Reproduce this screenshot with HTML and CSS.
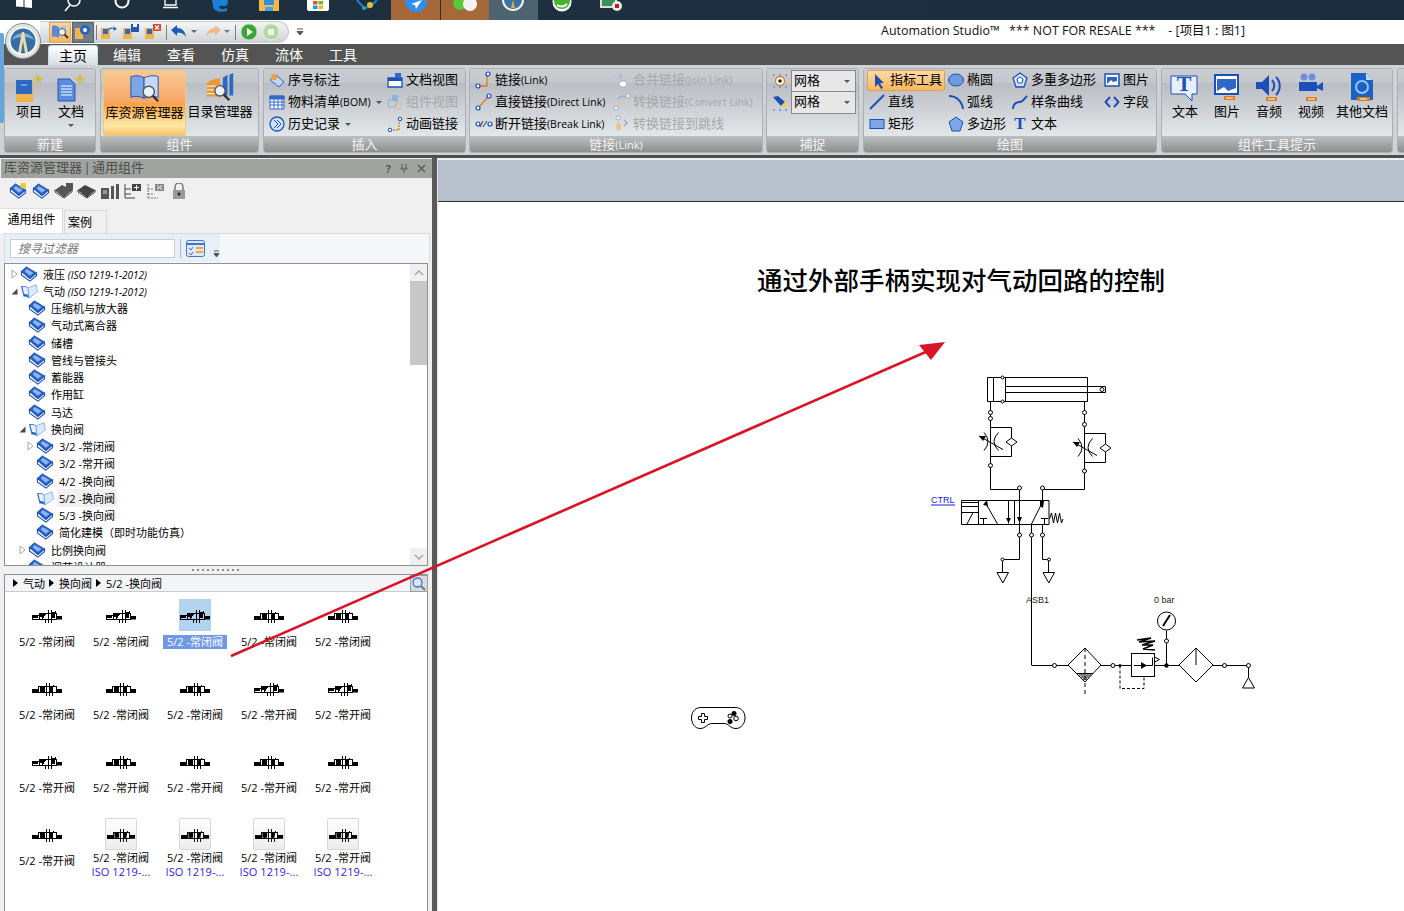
FILE: index.html
```html
<!DOCTYPE html>
<html lang="zh">
<head>
<meta charset="utf-8">
<title>Automation Studio</title>
<link rel="stylesheet" href="styles.css">
</head>
<body>
<svg class="defs" xmlns="http://www.w3.org/2000/svg">
  <symbol id="book" viewBox="0 0 20 18"><path d="M1.500 6 7 1l11.500 7-7.500 6z" fill="#2566d6" stroke="#1b4fb6"/><path d="M5 6 7.500 3.500l7.500 4.500-4 3z" fill="#8fb6ee"/><path d="M1.500 6v4L11 17l7.500-6V8L11 14z" fill="#fff" stroke="#1b4fb6" stroke-width="1.200"/></symbol>
  <symbol id="bookopen" viewBox="0 0 20 18"><path d="M1 4c3-1 6-.5 8 1.500l1 11.500c-2-1.500-4-2-6-1.500z" fill="#2566d6"/><path d="M9 5.500 18 2l1.500 8L10 17z" fill="#dce9fb" stroke="#6f9fe6" stroke-width=".8"/><path d="M2.500 4.500c2-.8 4.500-.3 6 1.300l.5 8c-1.500-1-3-1.300-4.500-1.300z" fill="#e7f0fc"/></symbol>
  <symbol id="expc" viewBox="0 0 7 10"><path d="M1 1 6 5 1 9z" fill="#fff" stroke="#a8a8a8"/></symbol>
  <symbol id="expo" viewBox="0 0 7 10"><path d="M6.500 2.500v6h-6z" fill="#4a4a4a"/></symbol>
  <symbol id="v1" viewBox="0 0 32 32"><g shape-rendering="crispEdges" fill="none" stroke="#000"><path d="M1.500 16.500h7v4h-7zM8.500 14.500h17v6h-17z"/><path d="M17.500 11v13M20.500 11v13M14.500 20v4M11 20l4-6M24 12l3 8"/></g><path d="M2 17h5v2H2zM26 17h5v3.500h-5zM9 15h4v3H9zM21 13h3v6h-3z"/></symbol>
  <symbol id="v2" viewBox="0 0 32 32"><g shape-rendering="crispEdges" fill="none" stroke="#000"><path d="M1.500 17.500h6v3h-6zM7.500 14.500h18v6h-18z"/><path d="M15.500 11v13M18.500 11v13M21.500 20v4M11 20l3-6M20 20l3-7"/></g><path d="M2 18h6v3H2zM25 17h6v4h-6zM9 15h5v5H9zM19 15h3v5h-3z"/></symbol>
  <symbol id="link" viewBox="0 0 18 18"><path d="M3 15h9V4" fill="none" stroke="#e07c1a" stroke-width="1.300"/><circle cx="3" cy="15" r="2" fill="#fff" stroke="#1846c4" stroke-width="1.200"/><circle cx="13" cy="3" r="2" fill="#fff" stroke="#1846c4" stroke-width="1.200"/></symbol>
  <symbol id="direct" viewBox="0 0 18 18"><path d="M3 15 13 4" stroke="#e07c1a" stroke-width="1.300"/><circle cx="3" cy="15" r="2" fill="#fff" stroke="#1846c4" stroke-width="1.200"/><circle cx="14" cy="3" r="2" fill="#fff" stroke="#1846c4" stroke-width="1.200"/></symbol>
  <symbol id="break" viewBox="0 0 18 18"><circle cx="3" cy="9" r="2" fill="#fff" stroke="#1846c4" stroke-width="1.200"/><circle cx="15" cy="9" r="2" fill="#fff" stroke="#1846c4" stroke-width="1.200"/><path d="M5 12 8 6M8 12l4-6" stroke="#555" stroke-width="1.200"/></symbol>
  <symbol id="join" viewBox="0 0 18 18"><path d="M1 5h16M1 13h16" stroke="#e9b98c"/><rect x="6" y="2" width="3" height="6" fill="#a9bde6"/><rect x="6" y="10" width="8" height="6" rx="3" fill="#fff" stroke="#94aee0"/></symbol>
  <symbol id="conv" viewBox="0 0 18 18"><path d="M3 15 14 4" stroke="#e9b98c" stroke-dasharray="2 1" stroke-width="1.300"/><path d="M5 6c2-3 5-3 7-2" fill="none" stroke="#94aee0" stroke-width="1.500"/><circle cx="3" cy="15" r="2" fill="#fff" stroke="#94aee0"/><circle cx="15" cy="3" r="2" fill="#fff" stroke="#94aee0"/></symbol>
  <symbol id="jump" viewBox="0 0 18 18"><circle cx="5" cy="3" r="2" fill="#fff" stroke="#94aee0"/><rect x="3" y="9" width="5" height="6" rx="1" fill="#f0c78f"/><path d="M5.500 5v11" stroke="#e9b98c"/><path d="M11 5l3 3-3 3" fill="none" stroke="#94aee0" stroke-width="1.500"/></symbol>
</svg>

<header class="taskbar">
  <div class="tb"><svg width="18" height="20" viewBox="0 0 18 20"><path d="M1 0h7.500v7L1 6.500zM9.500 0H17v8L9.500 7.200z" fill="#fff"/></svg></div>
  <div class="tb"><svg width="20" height="20" viewBox="0 0 20 20"><circle cx="11" cy="0" r="6" fill="none" stroke="#fff" stroke-width="1.500"/><path d="M7 5 2 11" stroke="#fff" stroke-width="1.500"/></svg></div>
  <div class="tb"><svg width="20" height="20" viewBox="0 0 20 20"><circle cx="10" cy="1" r="6.500" fill="none" stroke="#fff" stroke-width="2"/></svg></div>
  <div class="tb"><svg width="18" height="20" viewBox="0 0 18 20"><path d="M3 0v5h11V0M1 7.500h15" fill="none" stroke="#fff" stroke-width="1.300"/></svg></div>
  <div class="tb"><svg width="18" height="20" viewBox="0 0 18 20"><path d="M1 0h16c0 4-1 6-3 6H8c0 3 3 4 8 2v3c-7 2-14 0-14-5 0-2-1-4-1-6z" fill="#1a7fd6"/></svg></div>
  <div class="tb"><svg width="22" height="20" viewBox="0 0 22 20"><path d="M1 0h20v11H1z" fill="#f3b94a"/><path d="M6 0h10v5H6z" fill="#2f8fe0"/><path d="M7 7h8v4H7z" fill="#3da4ef"/></svg></div>
  <div class="tb"><svg width="24" height="20" viewBox="0 0 24 20"><path d="M1 0h22v9a2 2 0 0 1-2 2H3a2 2 0 0 1-2-2z" fill="#fff"/><path d="M7 1h4.500v3.500H7z" fill="#e8512a"/><path d="M12.500 1H17v3.500h-4.500z" fill="#75b92a"/><path d="M7 5.500h4.500V9H7z" fill="#1c9be8"/><path d="M12.500 5.500H17V9h-4.500z" fill="#f7b91d"/></svg></div>
  <div class="tb"><svg width="24" height="20" viewBox="0 0 24 20"><path d="M2 0 9 8l6-1 7-7" fill="none" stroke="#1682d8" stroke-width="2"/><circle cx="15" cy="5" r="3" fill="#e3c12c"/><circle cx="9" cy="8" r="2" fill="#28a8a0"/></svg></div>
  <div class="tb tb-warm"><svg width="28" height="20" viewBox="0 0 28 20"><circle cx="14" cy="1" r="11" fill="#2f8ff0"/><path d="M20 0 9 4l4 1 1 4z" fill="#fff"/></svg></div>
  <div class="tb tb-warm tb-line"><svg width="28" height="20" viewBox="0 0 28 20"><circle cx="9" cy="3" r="7" fill="#5cc636"/><circle cx="19" cy="4" r="7" fill="#f3f3f3"/></svg></div>
  <div class="tb tb-on"><svg width="24" height="20" viewBox="0 0 24 20"><circle cx="12" cy="0" r="11" fill="#eef2f6"/><circle cx="12" cy="0" r="9" fill="#3b72a6"/><path d="M10 8 12 0l2 8z" fill="#f2a33a"/></svg></div>
  <div class="tb"><svg width="24" height="20" viewBox="0 0 24 20"><circle cx="12" cy="2" r="9.500" fill="#fff"/><circle cx="12" cy="1" r="8" fill="#45b52f"/><path d="M7 5c3 2 7 2 10-1" fill="none" stroke="#fff" stroke-width="2"/></svg></div>
  <div class="tb"><svg width="26" height="20" viewBox="0 0 26 20"><path d="M2 0h17v8H2z" fill="#d8dee2"/><path d="M4 0h13v6H4z" fill="#3b8f55"/><circle cx="19" cy="6" r="5" fill="#eee"/><rect x="17" y="4" width="4" height="4" fill="#d4141d"/></svg></div>
</header>

<div class="titlerow">
  <div class="qat">
    <span class="qbtn qbtn-hot"><svg width="18" height="16" viewBox="0 0 18 16"><path d="M1 2c3-1 5 0 7 1v11c-2-1-4-2-7-1z" fill="#5c89d6"/><path d="M8 3c2-1 5-2 7-1v8" fill="#a9c8f2"/><circle cx="11" cy="8" r="3.500" fill="#e6f0fb" stroke="#555"/><path d="M13.500 10.500 17 14" stroke="#333" stroke-width="1.800"/></svg></span>
    <span class="qbtn qbtn-dark"><svg width="18" height="16" viewBox="0 0 18 16"><path d="M1 4h8v11H1z" fill="#f0b44e"/><circle cx="11" cy="6" r="5" fill="#2a62c8"/><circle cx="11" cy="6" r="2" fill="#fff"/></svg></span>
    <i class="qsep"></i>
    <span class="qicon"><svg width="18" height="16" viewBox="0 0 18 16"><path d="M1 4h9v11H1z" fill="#f0b44e"/><path d="M3 5h5v5H3z" fill="#2f66c8"/><path d="M8 6c1-3 4-3 6-2l-1-2 4 3-4 2 1-2c-2-.5-4 0-5 1z" fill="#2257b8"/></svg></span>
    <span class="qicon"><svg width="18" height="16" viewBox="0 0 18 16"><path d="M1 4h9v11H1z" fill="#f0b44e"/><path d="M3 5h5v5H3z" fill="#2f66c8"/><path d="M9 0h8v8H9z" fill="#2257b8"/><path d="M11 0h4v3h-4z" fill="#fff"/></svg></span>
    <span class="qicon"><svg width="18" height="16" viewBox="0 0 18 16"><path d="M1 4h9v11H1z" fill="#f0b44e"/><path d="M3 5h5v5H3z" fill="#2f66c8"/><path d="M9 0h8v7H9z" fill="#d94a2a"/><path d="M11 1.500l4 4M15 1.500l-4 4" stroke="#fff" stroke-width="1.300"/></svg></span>
    <i class="qsep"></i>
    <span class="qicon q-wide"><svg width="28" height="16" viewBox="0 0 28 16"><path d="M1 6 7 1v3c5 0 8 3 9 9-2-3-5-5-9-4v3z" fill="#1e5cb8"/><path d="M21 6h6l-3 3z" fill="#666"/></svg></span>
    <span class="qicon q-wide q-wide2"><svg width="28" height="16" viewBox="0 0 28 16"><path d="M17 6l-6-5v3C6 4 3 7 2 13c2-3 5-5 9-4v3z" fill="#f2b98a"/><path d="M20 6h6l-3 3z" fill="#777"/></svg></span>
    <i class="qsep qsep-last"></i>
    <span class="qicon"><svg width="18" height="18" viewBox="0 0 18 18"><circle cx="9" cy="9" r="8" fill="#3aa63a" stroke="#b8e0a8"/><path d="M7 5l6 4-6 4z" fill="#fff"/></svg></span>
    <span class="qicon"><svg width="18" height="18" viewBox="0 0 18 18"><circle cx="9" cy="9" r="8" fill="#b3d8a4" stroke="#dcefd2"/><rect x="6" y="6" width="6" height="6" fill="#eef5e8"/></svg></span>
  </div>
  <span class="qmenu"><svg width="8" height="8" viewBox="0 0 8 8"><path d="M1 1h6M1 3.500h6L4 7z" stroke="#555" fill="#555"/></svg></span>
  <div class="apptitle">Automation Studio™   *** NOT FOR RESALE ***    - [项目1 : 图1]</div>
</div>

<nav class="tabs">
  <span class="tab tab-on">主页</span><span class="tab">编辑</span><span class="tab">查看</span><span class="tab">仿真</span><span class="tab">流体</span><span class="tab">工具</span>
</nav>

<section class="ribbon">
  <div class="group g-new">
    <div class="gbody gbody-big">
      <div class="big"><svg class="ico32" viewBox="0 0 32 32"><path d="M3 8h17v22H3z" fill="#f0b44e"/><path d="M3 8h16v14H3z" fill="#2b68c4"/><path d="M8 13h6" stroke="#bcd2f4"/><path d="M22 4l6 6M28 4l-6 6M25 2v10M20 7h10" stroke="#d8b80e"/></svg><span>项目</span></div>
      <div class="big"><svg class="ico32" viewBox="0 0 32 32"><path d="M3 7h12l5 5v17H3z" fill="#5a8bdc" stroke="#2757b4"/><path d="M6 14h11M6 17h11M6 20h11M6 23h11" stroke="#fff"/><path d="M22 4l6 6M28 4l-6 6M25 2v10M20 7h10" stroke="#d8b80e"/></svg><span>文档</span><i class="caret"></i></div>
    </div>
    <div class="glabel">新建</div>
  </div>
  <div class="group g-comp">
    <div class="gbody gbody-big">
      <div class="big big-lib"><svg class="ico32" viewBox="0 0 34 34"><path d="M2 4c5-2 10-1 14 1v22c-4-2-9-3-14-1z" fill="#7ea6e4" stroke="#1e4fb4"/><path d="M16 5c5-2 11-3 15-1v22c-5-2-10-1-15 1z" fill="#c5d9f6" stroke="#1e4fb4"/><circle cx="21" cy="20" r="6" fill="#e9f2fc" stroke="#555" stroke-width="1.500"/><path d="M25 24l6 6" stroke="#333" stroke-width="2.500"/></svg><span>库资源管理器</span></div>
      <div class="big big-cat"><svg class="ico32" viewBox="0 0 34 34"><path d="M3 12c4-4 10-5 14-5v19H3z" fill="#e79a3a"/><path d="M3 15h14M3 19h14M3 23h14" stroke="#fff"/><path d="M20 6l5-3v22h-5zM27 3l4-2v24h-4z" fill="#2b68c4"/><circle cx="17" cy="20" r="5.500" fill="#e9f2fc" stroke="#555" stroke-width="1.500"/><path d="M21 24l6 6" stroke="#333" stroke-width="2.500"/></svg><span>目录管理器</span></div>
    </div>
    <div class="glabel">组件</div>
  </div>
  <div class="group g-ins">
    <div class="gbody gcols">
      <div class="col c-ins1">
        <div class="ri"><svg class="i16" viewBox="0 0 16 16"><path d="M1 8 7 3l8 7-5 5z" fill="#bcd4f4" stroke="#2f66c8"/><circle cx="5" cy="5" r="3" fill="#f0a030"/></svg><span>序号标注</span></div>
        <div class="ri"><svg class="i16" viewBox="0 0 16 16"><path d="M1 2h14v13H1z" fill="#fff" stroke="#3569c8"/><path d="M1 2h14v3H1zM5 5v10M9 5v10M13 5v10M1 8h14M1 11h14" stroke="#3569c8" fill="#3569c8"/></svg><span>物料清单<small>(BOM)</small></span><i class="caret caret-r"></i></div>
        <div class="ri"><svg class="i16" viewBox="0 0 16 16"><circle cx="8" cy="8" r="7" fill="#cfe0f8" stroke="#1f55bc" stroke-width="1.300"/><path d="M5 4l4 4-4 4M8 4l4 4-4 4" fill="none" stroke="#1f55bc"/></svg><span>历史记录</span><i class="caret caret-r"></i></div>
      </div>
      <div class="col c-ins2">
        <div class="ri"><svg class="i16" viewBox="0 0 16 16"><path d="M1 6h14v9H1z" fill="#fff" stroke="#1b50b8" stroke-width="1.300"/><path d="M1 6h14v3H1z" fill="#1b50b8"/><path d="M8 1h6v5H8z" fill="#2f66c8"/></svg><span>文档视图</span></div>
        <div class="ri ri-off"><svg class="i16" viewBox="0 0 16 16"><path d="M1 6h8v7H1z" fill="none" stroke="#94aee0"/><path d="M5 1h6v6H5z" fill="#94aee0"/><circle cx="11" cy="12" r="3.500" fill="none" stroke="#e9b98c"/></svg><span>组件视图</span></div>
        <div class="ri"><svg class="i16" viewBox="0 0 16 16"><path d="M3 14h9V5" fill="none" stroke="#e07c1a" stroke-dasharray="2 1" stroke-width="1.300"/><circle cx="3" cy="14" r="1.800" fill="#fff" stroke="#1846c4"/><circle cx="13" cy="3" r="1.800" fill="#fff" stroke="#1846c4"/></svg><span>动画链接</span></div>
      </div>
    </div>
    <div class="glabel">插入</div>
  </div>
  <div class="group g-link">
    <div class="gbody gcols">
      <div class="col c-link1">
        <div class="ri"><svg class="i18" viewBox="0 0 18 18"><use href="#link"/></svg><span>链接<small>(Link)</small></span></div>
        <div class="ri"><svg class="i18" viewBox="0 0 18 18"><use href="#direct"/></svg><span>直接链接<small>(Direct Link)</small></span></div>
        <div class="ri"><svg class="i18" viewBox="0 0 18 18"><use href="#break"/></svg><span>断开链接<small>(Break Link)</small></span></div>
      </div>
      <div class="col c-link2">
        <div class="ri ri-off"><svg class="i18" viewBox="0 0 18 18"><use href="#join"/></svg><span>合并链接<small>(Join Link)</small></span></div>
        <div class="ri ri-off"><svg class="i18" viewBox="0 0 18 18"><use href="#conv"/></svg><span>转换链接<small>(Convert Link)</small></span></div>
        <div class="ri ri-off"><svg class="i18" viewBox="0 0 18 18"><use href="#jump"/></svg><span>转换链接到跳线</span></div>
      </div>
    </div>
    <div class="glabel">链接<small>(Link)</small></div>
  </div>
  <div class="group g-snap">
    <div class="gbody snap">
      <div class="snaprow"><svg class="i16" viewBox="0 0 16 16"><g fill="#7c9ee0"><rect x="1" y="1" width="2" height="2"/><rect x="7" y="1" width="2" height="2"/><rect x="13" y="1" width="2" height="2"/><rect x="1" y="13" width="2" height="2"/><rect x="7" y="13" width="2" height="2"/><rect x="13" y="13" width="2" height="2"/></g><circle cx="8" cy="8" r="4.500" fill="#fff" stroke="#e07c1a" stroke-width="1.300"/><circle cx="8" cy="8" r="1.800" fill="#222"/></svg><span class="combo"><span>网格</span><i class="caret"></i></span></div>
      <div class="snaprow"><svg class="i16" viewBox="0 0 16 16"><path d="M1 2l5-1 7 6-4 4z" fill="#1b50b8"/><path d="M9 11l4-4 2 3-2 3z" fill="#f3d23a"/><g fill="#7c9ee0"><rect x="1" y="14" width="2" height="2"/><rect x="7" y="14" width="2" height="2"/><rect x="13" y="14" width="2" height="2"/></g></svg><span class="combo"><span>网格</span><i class="caret"></i></span></div>
    </div>
    <div class="glabel">捕捉</div>
  </div>
  <div class="group g-draw">
    <div class="gbody gcols">
      <div class="col c-d1">
        <div class="ri ri-hot"><svg class="i16" viewBox="0 0 16 16"><path d="M4 1v13l3-3 3 5 2-1-3-5h4z" fill="#1b50b8"/></svg><span>指标工具</span></div>
        <div class="ri"><svg class="i16" viewBox="0 0 16 16"><path d="M1 15 15 1" stroke="#1b50b8" stroke-width="2"/></svg><span>直线</span></div>
        <div class="ri"><svg class="i16" viewBox="0 0 16 16"><rect x="1" y="3.500" width="14" height="9" fill="#7fa6e6" stroke="#1b50b8"/></svg><span>矩形</span></div>
      </div>
      <div class="col c-d2">
        <div class="ri"><svg class="i16" viewBox="0 0 16 16"><ellipse cx="8" cy="8" rx="7.500" ry="6" fill="#6f9ae0" stroke="#1b50b8"/></svg><span>椭圆</span></div>
        <div class="ri"><svg class="i16" viewBox="0 0 16 16"><path d="M1 2c7 0 13 5 14 13" fill="none" stroke="#1b50b8" stroke-width="2"/></svg><span>弧线</span></div>
        <div class="ri"><svg class="i16" viewBox="0 0 16 16"><path d="M8 1l7 5-3 9H4L1 6z" fill="#7fa6e6" stroke="#1b50b8"/></svg><span>多边形</span></div>
      </div>
      <div class="col c-d3">
        <div class="ri"><svg class="i16" viewBox="0 0 16 16"><path d="M8 1l7 5-3 9H4L1 6z" fill="#d7e4f8" stroke="#1b50b8" stroke-width="1.300"/><path d="M8 5l3 2-1 4H6L5 7z" fill="#fff" stroke="#1b50b8"/></svg><span>多重多边形</span></div>
        <div class="ri"><svg class="i16" viewBox="0 0 16 16"><path d="M1 15c0-6 4-7 7-7 3 0 4-3 7-6" fill="none" stroke="#1b50b8" stroke-width="2"/></svg><span>样条曲线</span></div>
        <div class="ri"><b class="t-ico">T</b><span>文本</span></div>
      </div>
      <div class="col c-d4">
        <div class="ri"><svg class="i16" viewBox="0 0 16 16"><rect x="1" y="2" width="14" height="12" fill="#fff" stroke="#1b50b8" stroke-width="1.500"/><path d="M3 12V5h10v4l-4 1-2-2z" fill="#2f66c8"/></svg><span>图片</span></div>
        <div class="ri"><svg class="i16" viewBox="0 0 16 16"><path d="M6 3 1.500 8 6 13M10 3l4.500 5L10 13" fill="none" stroke="#1b50b8" stroke-width="2"/></svg><span>字段</span></div>
      </div>
    </div>
    <div class="glabel">绘图</div>
  </div>
  <div class="group g-tips">
    <div class="gbody gbody-big tips">
      <div class="big"><svg class="ico32" viewBox="0 0 32 32"><path d="M2 4h26v18h-5v7l-7-7H2z" fill="#e8effb" stroke="#1b50b8"/><text x="15" y="19" class="svgT">T</text></svg><span>文本</span></div>
      <div class="big"><svg class="ico32" viewBox="0 0 32 32"><rect x="4" y="3" width="23" height="19" fill="#fff" stroke="#1b50b8" stroke-width="2"/><path d="M6 19V7h19v9l-8 3-4-4z" fill="#2f66c8"/><path d="M13 26h11" stroke="#e07c1a" stroke-width="4"/><path d="M15 26h7" stroke="#fff"/></svg><span>图片</span></div>
      <div class="big"><svg class="ico32" viewBox="0 0 32 32"><path d="M3 10h6l7-7v21l-7-7H3z" fill="#1b50b8"/><path d="M19 8c3 3 3 8 0 11M23 5c5 5 5 13 0 18" fill="none" stroke="#1b50b8" stroke-width="2"/><path d="M13 27h11" stroke="#e07c1a" stroke-width="4"/><path d="M15 27h7" stroke="#fff"/></svg><span>音频</span></div>
      <div class="big"><svg class="ico32" viewBox="0 0 32 32"><circle cx="9" cy="5" r="3.500" fill="#6f8fd6"/><circle cx="17" cy="5" r="3.500" fill="#6f8fd6"/><path d="M4 10h18v9H4z" fill="#1b50b8"/><path d="M22 14l6-4v9l-6-3z" fill="#1b50b8"/><path d="M11 27h11" stroke="#e07c1a" stroke-width="4"/><path d="M13 27h7" stroke="#fff"/></svg><span>视频</span></div>
      <div class="big"><svg class="ico32" viewBox="0 0 32 32"><path d="M5 1h15l7 7v20H5z" fill="#1b62c8"/><path d="M20 1l7 7h-7z" fill="#bcd8f6"/><circle cx="16" cy="15" r="6" fill="none" stroke="#9cc4f0" stroke-width="2"/><path d="M11 27h13" stroke="#e07c1a" stroke-width="4"/><path d="M14 27h7" stroke="#fff"/></svg><span>其他文档</span></div>
    </div>
    <div class="glabel">组件工具提示</div>
  </div>
  <div class="group g-next"><div class="gbody"></div><div class="glabel"></div></div>
</section>
<div class="darkstrip"></div>

<main class="workspace">
  <aside class="lib">
    <div class="libtitle"><span>库资源管理器 | 通用组件</span><span class="libctl"><b>?</b><svg width="8" height="9" viewBox="0 0 8 9"><path d="M2 0v4H1v1h6V4H6V0M4 5v4" fill="none" stroke="#555"/></svg><svg width="9" height="9" viewBox="0 0 9 9"><path d="M1 1l7 7M8 1 1 8" stroke="#555" stroke-width="1.300"/></svg></span></div>
    <div class="libtools">
      <svg class="i17" viewBox="0 0 20 18"><use href="#book"/><rect x="13" y="0" width="6" height="6" fill="#f0c830"/></svg>
      <svg class="i17" viewBox="0 0 20 18"><use href="#book"/></svg>
      <svg class="i17" viewBox="0 0 20 16"><path d="M1 7 8 2l10 5-8 7z" fill="#555"/><path d="M1 7v2l9 6 8-6V7l-8 7z" fill="#fff" stroke="#444"/><path d="M12 0h7v7h-7z" fill="#555"/></svg>
      <svg class="i17" viewBox="0 0 20 16"><path d="M1 7 8 2l10 5-8 7z" fill="#444"/><path d="M1 7v2l9 6 8-6V7l-8 7z" fill="#fff" stroke="#333"/></svg>
      <svg class="i17" viewBox="0 0 20 16"><path d="M1 5h8v11H1zM11 3h3v13h-3zM16 1h3v15h-3z" fill="#555"/><path d="M3 8h4M3 10h4" stroke="#ddd"/></svg>
      <svg class="i17" viewBox="0 0 20 16"><path d="M2 1v14M2 6h6M2 11h6M2 15h10" fill="none" stroke="#444"/><path d="M9 1h9v7H9z" fill="#444"/><path d="M11 4.500h5M13.500 2v5" stroke="#fff"/></svg>
      <svg class="i17" viewBox="0 0 20 16"><path d="M2 1v14M2 6h6M2 11h6M2 15h10" fill="none" stroke="#777" stroke-dasharray="2 1"/><path d="M9 1h9v7H9z" fill="#888"/><path d="M11 2.500l5 4M16 2.500l-5 4" stroke="#fff"/></svg>
      <svg class="i17" viewBox="0 0 20 16"><path d="M6 7V4a4 4 0 0 1 8 0v3" fill="none" stroke="#777" stroke-width="1.500"/><rect x="4" y="7" width="12" height="9" fill="#999"/><circle cx="10" cy="11" r="1.500" fill="#222"/></svg>
    </div>
    <div class="libtabs"><span class="ltab ltab-on">通用组件</span><span class="ltab">案例</span></div>
    <div class="libbody">
      <div class="filterrow">
        <div class="filter"><span class="finput">搜寻过滤器</span><i class="fsep"></i><svg width="19" height="17" viewBox="0 0 19 17"><rect x=".5" y=".5" width="18" height="16" rx="2" fill="#dde8f8" stroke="#3f74d0"/><path d="M1 4h17" stroke="#3f74d0" stroke-width="2"/><path d="M3 8l2 2 2-3M3 13l2 2 2-3" fill="none" stroke="#3f74d0"/><path d="M10 8h7M10 12h7" stroke="#eda73a" stroke-width="2"/></svg><svg class="fmenu" width="7" height="8" viewBox="0 0 7 8"><path d="M1 1h5M1 3.500h5L3.500 7z" stroke="#555" fill="#555"/></svg></div>
      </div>
      <div class="treebox">
        <ul class="tree">
          <li class="l0"><svg class="exp" viewBox="0 0 7 10"><use href="#expc"/></svg><svg class="bk" viewBox="0 0 20 18"><use href="#book"/></svg><span>液压 <em>(ISO 1219-1-2012)</em></span></li>
          <li class="l0"><svg class="exp" viewBox="0 0 7 10"><use href="#expo"/></svg><svg class="bk" viewBox="0 0 20 18"><use href="#bookopen"/></svg><span>气动 <em>(ISO 1219-1-2012)</em></span></li>
          <li class="l1"><i class="exp"></i><svg class="bk" viewBox="0 0 20 18"><use href="#book"/></svg><span>压缩机与放大器</span></li>
          <li class="l1"><i class="exp"></i><svg class="bk" viewBox="0 0 20 18"><use href="#book"/></svg><span>气动式离合器</span></li>
          <li class="l1"><i class="exp"></i><svg class="bk" viewBox="0 0 20 18"><use href="#book"/></svg><span>储槽</span></li>
          <li class="l1"><i class="exp"></i><svg class="bk" viewBox="0 0 20 18"><use href="#book"/></svg><span>管线与管接头</span></li>
          <li class="l1"><i class="exp"></i><svg class="bk" viewBox="0 0 20 18"><use href="#book"/></svg><span>蓄能器</span></li>
          <li class="l1"><i class="exp"></i><svg class="bk" viewBox="0 0 20 18"><use href="#book"/></svg><span>作用缸</span></li>
          <li class="l1"><i class="exp"></i><svg class="bk" viewBox="0 0 20 18"><use href="#book"/></svg><span>马达</span></li>
          <li class="l1"><svg class="exp" viewBox="0 0 7 10"><use href="#expo"/></svg><svg class="bk" viewBox="0 0 20 18"><use href="#bookopen"/></svg><span>换向阀</span></li>
          <li class="l2"><svg class="exp" viewBox="0 0 7 10"><use href="#expc"/></svg><svg class="bk" viewBox="0 0 20 18"><use href="#book"/></svg><span>3/2 -常闭阀</span></li>
          <li class="l2"><i class="exp"></i><svg class="bk" viewBox="0 0 20 18"><use href="#book"/></svg><span>3/2 -常开阀</span></li>
          <li class="l2"><i class="exp"></i><svg class="bk" viewBox="0 0 20 18"><use href="#book"/></svg><span>4/2 -换向阀</span></li>
          <li class="l2"><i class="exp"></i><svg class="bk" viewBox="0 0 20 18"><use href="#bookopen"/></svg><span class="sel">5/2 -换向阀</span></li>
          <li class="l2"><i class="exp"></i><svg class="bk" viewBox="0 0 20 18"><use href="#book"/></svg><span>5/3 -换向阀</span></li>
          <li class="l2"><i class="exp"></i><svg class="bk" viewBox="0 0 20 18"><use href="#book"/></svg><span>简化建模（即时功能仿真）</span></li>
          <li class="l1"><svg class="exp" viewBox="0 0 7 10"><use href="#expc"/></svg><svg class="bk" viewBox="0 0 20 18"><use href="#book"/></svg><span>比例换向阀</span></li>
          <li class="l1"><i class="exp"></i><svg class="bk" viewBox="0 0 20 18"><use href="#book"/></svg><span>调节设计器</span></li>
        </ul>
        <div class="scroll">
          <span class="sbtn"><svg width="10" height="6" viewBox="0 0 10 6"><path d="M1 5l4-4 4 4" fill="none" stroke="#a0a0a0" stroke-width="1.300"/></svg></span>
          <span class="thumb"></span>
          <span class="strack"></span>
          <span class="sbtn"><svg width="10" height="6" viewBox="0 0 10 6"><path d="M1 1l4 4 4-4" fill="none" stroke="#a0a0a0" stroke-width="1.300"/></svg></span>
        </div>
      </div>
      <div class="grip"><span></span></div>
      <div class="crumb">
        <div class="crumbtext"><i class="tri"></i><span>气动</span><i class="tri"></i><span>换向阀</span><i class="tri"></i><span>5/2 -换向阀</span></div>
        <span class="crumbbtn"><svg width="14" height="14" viewBox="0 0 14 14"><circle cx="5.500" cy="5.500" r="4.500" fill="#d6e6fa" stroke="#3f74d0" stroke-width="1.300"/><path d="M9 9l4 4" stroke="#777" stroke-width="2"/></svg></span>
      </div>
      <div class="cells">
        <figure class="cell"><svg class="tile" viewBox="0 0 32 32"><use href="#v1"/></svg><figcaption>5/2 -常闭阀</figcaption></figure>
        <figure class="cell"><svg class="tile" viewBox="0 0 32 32"><use href="#v1"/></svg><figcaption>5/2 -常闭阀</figcaption></figure>
        <figure class="cell cell-sel"><svg class="tile" viewBox="0 0 32 32"><use href="#v1"/></svg><figcaption>5/2 -常闭阀</figcaption></figure>
        <figure class="cell"><svg class="tile" viewBox="0 0 32 32"><use href="#v2"/></svg><figcaption>5/2 -常闭阀</figcaption></figure>
        <figure class="cell"><svg class="tile" viewBox="0 0 32 32"><use href="#v2"/></svg><figcaption>5/2 -常闭阀</figcaption></figure>

        <figure class="cell"><svg class="tile" viewBox="0 0 32 32"><use href="#v2"/></svg><figcaption>5/2 -常闭阀</figcaption></figure>
        <figure class="cell"><svg class="tile" viewBox="0 0 32 32"><use href="#v2"/></svg><figcaption>5/2 -常闭阀</figcaption></figure>
        <figure class="cell"><svg class="tile" viewBox="0 0 32 32"><use href="#v2"/></svg><figcaption>5/2 -常闭阀</figcaption></figure>
        <figure class="cell"><svg class="tile" viewBox="0 0 32 32"><use href="#v1"/></svg><figcaption>5/2 -常开阀</figcaption></figure>
        <figure class="cell"><svg class="tile" viewBox="0 0 32 32"><use href="#v1"/></svg><figcaption>5/2 -常开阀</figcaption></figure>

        <figure class="cell"><svg class="tile" viewBox="0 0 32 32"><use href="#v1"/></svg><figcaption>5/2 -常开阀</figcaption></figure>
        <figure class="cell"><svg class="tile" viewBox="0 0 32 32"><use href="#v2"/></svg><figcaption>5/2 -常开阀</figcaption></figure>
        <figure class="cell"><svg class="tile" viewBox="0 0 32 32"><use href="#v2"/></svg><figcaption>5/2 -常开阀</figcaption></figure>
        <figure class="cell"><svg class="tile" viewBox="0 0 32 32"><use href="#v2"/></svg><figcaption>5/2 -常开阀</figcaption></figure>
        <figure class="cell"><svg class="tile" viewBox="0 0 32 32"><use href="#v2"/></svg><figcaption>5/2 -常开阀</figcaption></figure>

        <figure class="cell"><svg class="tile" viewBox="0 0 32 32"><use href="#v2"/></svg><figcaption>5/2 -常开阀</figcaption></figure>
        <figure class="cell cell-iso"><svg class="tile" viewBox="0 0 32 32"><use href="#v2"/></svg><figcaption>5/2 -常闭阀</figcaption><a>ISO 1219-...</a></figure>
        <figure class="cell cell-iso"><svg class="tile" viewBox="0 0 32 32"><use href="#v2"/></svg><figcaption>5/2 -常闭阀</figcaption><a>ISO 1219-...</a></figure>
        <figure class="cell cell-iso"><svg class="tile" viewBox="0 0 32 32"><use href="#v2"/></svg><figcaption>5/2 -常闭阀</figcaption><a>ISO 1219-...</a></figure>
        <figure class="cell cell-iso"><svg class="tile" viewBox="0 0 32 32"><use href="#v2"/></svg><figcaption>5/2 -常开阀</figcaption><a>ISO 1219-...</a></figure>
      </div>
    </div>
  </aside>
  <div class="vsplit"></div>
  <div class="canvas">
    <div class="canvashead"></div>
    <svg class="sheet" viewBox="438 202 966 709" xmlns="http://www.w3.org/2000/svg">
      <text x="961" y="290" text-anchor="middle" class="d-title">通过外部手柄实现对气动回路的控制</text>
      <g fill="none" stroke="#000" stroke-width="1">
        <!-- cylinder -->
        <path d="M987.500 377.500h100v24h-100zM993.500 377.500v24M1005.500 377.500v24M1005.500 386.500h100v6h-100z"/>
        <path d="M990.500 401.500v88h29M1084.500 401.500v88h-41"/>
        <!-- flow controls -->
        <path d="M990.500 427.500h21v29h-21M1084.500 433.500h21v29h-21"/>
        <path d="M984 432.500q8 9 0 18M998.500 432.500q-9 9 0 18M979 436l24 13.500M1078 438.500q8 9 0 18M1092.500 438.500q-9 9 0 18M1073 442l24 13.500"/>
        <path d="M1006 442l5.500-4 5.500 4-5.500 4zM1100 448l5.500-4 5.500 4-5.500 4z" fill="#fff"/>
        <!-- valve -->
        <path d="M961.500 500.500h17v24h-17zM978.500 500.500h70.500v24h-70.500zM1014.500 500.500v24"/>
        <path d="M961.500 502.500h17M961.500 506.500h17M961.500 512.500h17M967 524l6-11.500"/>
        <path d="M985 502l12.500 22M983.500 524v-6M980 518.500h7M1008.500 500.500v23M1019.500 489v35M1031.500 524l11-22M1042.500 489v12M1044.500 524v-6M1041 518.500h7"/>
        <path d="M1031.500 524v141"/>
        <path d="M1049.500 519l2-6 2 10 2-10 2 10 2-10 2 10 1.500-4"/>
        <path d="M1019.500 524v35.500h-17v13M1042.500 524v35.500h6v13"/>
        <path d="M997 572.500h11.500l-5.700 10.500zM1043 572.500h11.500l-5.700 10.500z"/>
        <!-- air line -->
        <path d="M1031.500 665.500h37M1100.500 665.500h31M1154.500 665.500h25M1212 665.500h36.500v12"/>
        <path d="M1085 648l16 17-16 17-17-17zM1196 648l17 17-17 17-17-17z"/>
        <path d="M1085 648v46" stroke-dasharray="4 3"/>
        <path d="M1196 648v17"/>
        <path d="M1077 673.500h16M1079 675l12 0M1081 677h8M1083 679h4"/>
        <path d="M1120 665.500v23h24v-12" stroke-dasharray="3 2"/>
        <rect x="1131.500" y="653.500" width="23" height="23" fill="#fff"/>
        <path d="M1134 665.500h18.500v-8M1154.500 657l5 2.500-5 2.500"/>
        <path d="M1137 640l14-2-12 4 16-1-13 4 11 0-10 4 12 1" stroke-width="1.500"/>
        <path d="M1166.500 665.500v-35"/>
        <circle cx="1166.500" cy="621" r="9"/>
        <path d="M1163 626l7-11" stroke-width="2"/>
        <path d="M1248.500 677.500l6 10.500h-12z"/>
      </g>
      <g>
        <path d="M979 436l7 0-3 5zM1073 442l7 0-3 5z"/>
        <path d="M983 505l4-5 1 6zM1006 518h5l-2.500 5zM1017 517h5l-2.500 6zM1040 501l4 0-1 7-3-2z"/>
        <path d="M1141 662l6 3.500-6 3.500z"/>
      </g>
      <g fill="#fff" stroke="#000">
        <circle cx="1002.500" cy="377.500" r="1.500"/><circle cx="1002.500" cy="401.500" r="1.500"/>
        <circle cx="1102" cy="389.500" r="2"/>
        <circle cx="990.500" cy="412.500" r="2"/><circle cx="990.500" cy="418.500" r="2"/><circle cx="990.500" cy="465.500" r="2"/>
        <circle cx="1084.500" cy="412.500" r="2"/><circle cx="1084.500" cy="424.500" r="2"/><circle cx="1084.500" cy="471" r="2"/>
        <circle cx="1019.500" cy="488" r="2"/><circle cx="1042.500" cy="488" r="2"/>
        <circle cx="1019.500" cy="535" r="2"/><circle cx="1031.500" cy="535" r="2"/><circle cx="1042.500" cy="535" r="2"/>
        <circle cx="1002.500" cy="559.500" r="1.500"/><circle cx="1049" cy="559.500" r="1.500"/>
        <circle cx="1054.500" cy="665.500" r="2"/><circle cx="1113" cy="665.500" r="2"/>
        <circle cx="1166.500" cy="641" r="2"/><circle cx="1224.500" cy="665.500" r="2"/><circle cx="1248.500" cy="665.500" r="2"/>
      </g>
      <circle cx="1120" cy="665.500" r="1.500"/><circle cx="1166.500" cy="665.500" r="2.200"/>
      <text x="931" y="503" class="d-ctrl">CTRL</text>
      <path d="M931 505h24" stroke="#1a1ae0"/>
      <text x="1026" y="603" class="d-small">ASB1</text>
      <text x="1154" y="603" class="d-small">0 bar</text>
      <!-- gamepad -->
      <path d="M701 707.500h34c7 0 10 5 10 10.500s-4 10.500-9 10.500c-6 0-7-5-12-5h-12c-5 0-6 5-12 5-5 0-8.500-5-8.500-10.500s3-10.500 9.500-10.500z" fill="#fff" stroke="#000"/>
      <path d="M701.500 713.500h3v3h3v3h-3v3h-3v-3h-3v-3h3z" fill="#fff" stroke="#000"/>
      <circle cx="734" cy="713.500" r="2.500"/><circle cx="736" cy="718.500" r="2.300" fill="#fff" stroke="#000"/><circle cx="730" cy="716" r="2" fill="#fff" stroke="#000"/><circle cx="730" cy="721.500" r="2.500"/>
    </svg>
  </div>
</main>

<svg class="redarrow" width="1404" height="911" viewBox="0 0 1404 911" xmlns="http://www.w3.org/2000/svg">
  <path d="M231 656 928 351" stroke="#dc1228" stroke-width="2.600"/>
  <path d="M945 342 919 345 931 360z" fill="#dc1228"/>
</svg>

<i class="edgebar"></i>
<svg class="logo" width="36" height="36" viewBox="0 0 36 36" xmlns="http://www.w3.org/2000/svg">
  <circle cx="18" cy="18" r="17.500" fill="#dfe4e8" stroke="#7f8a93"/>
  <circle cx="18" cy="18" r="14" fill="#fff"/>
  <circle cx="18" cy="18" r="12.500" fill="#346fa6"/>
  <path d="M6 18C9 12 14 10 18 10s9 2 12 8c-3-3-7-4-12-4S9 15 6 18z" fill="#7fb0d8"/>
  <path d="M13 30 17 9h2l4 21h-3l-2-12-2 12z" fill="#f6d9a8"/>
</svg>
</body>
</html>
```

FILE: styles.css
```css
* { box-sizing: border-box; }
html, body { margin: 0; padding: 0; }
body {
  width: 1404px; height: 911px; overflow: hidden; position: relative;
  font-family: "Open Sans", "Noto Sans CJK SC", sans-serif;
  font-size: 13px; color: #000; background: #f0f0f0;
}
.defs { display: none; }
svg { display: block; flex: none; }

/* taskbar */
.taskbar { height: 20px; display: flex; background: linear-gradient(90deg, #1e2f3e, #1c2d40); overflow: hidden; }
.tb { width: 48.9px; height: 20px; display: flex; justify-content: center; }
.tb-warm { background: #a5683a; }
.tb-line { border-left: 1px solid #3a2a1e; }
.tb-on { background: #4e6270; }

/* title row */
.titlerow { height: 24px; background: #fff; display: flex; align-items: center; position: relative; }
.qat {
  margin-left: 40px; width: 249px; height: 22px; padding-left: 9px;
  display: flex; align-items: center;
  background: linear-gradient(#f4f6f7, #cfd4d8); border: 1px solid #c6ccd1; border-left: 0;
  border-radius: 0 11px 11px 0;
}
.qbtn { width: 22px; height: 21px; display: flex; align-items: center; justify-content: center; }
.qbtn-hot { background: linear-gradient(#fbd6a2, #f7b45f); border: 1px solid #d9a860; }
.qbtn-dark { background: #707d89; border: 1px solid #56616b; margin: 0 2px 0 1px; }
.qsep { width: 1px; height: 15px; background: #7a7f84; margin-right: 3px; }
.qsep-last { margin-right: 4px; }
.qicon { width: 22px; height: 20px; display: flex; align-items: center; }
.q-wide { width: 34px; }
.q-wide2 { width: 31px; }
.qmenu { margin-left: 7px; }
.apptitle { margin-left: auto; padding: 0 159px 4px 0; white-space: pre; font-size: 12.450px; color: #111; }

/* tabs */
.tabs { height: 21px; background: #545454; display: flex; padding: 1px 0 0 48px; }
.tab { width: 54px; text-align: center; color: #fff; font-size: 14px; line-height: 19px; }
.tab-on {
  width: 50px; margin-right: 2px; color: #000;
  background: linear-gradient(#fff, #d6dde2); border: 1px solid #b9dfe9; border-bottom: 0; border-radius: 3px 3px 0 0;
}

/* ribbon */
.ribbon { height: 90px; padding: 3px 0 2px 4px; display: flex; gap: 4px; background: #cfd2d5; overflow: hidden; }
.group { height: 85px; flex: none; display: flex; flex-direction: column; border: 1px solid #aab0b5; border-radius: 3px; overflow: hidden; }
.gbody {
  flex: 1; min-height: 0;
  background: linear-gradient(#c9ccd1 0, #c4c7cc 14px, #babdc3 14px, #e2e7e9 100%);
}
.glabel {
  height: 16px; text-align: center; color: #f4f4f4; font-size: 13px; line-height: 16px;
  background: linear-gradient(#bcbfbf, #8e9090);
}
.glabel small { font-size: 11px; }
.g-new { width: 92px; } .g-comp { width: 159px; } .g-ins { width: 203px; }
.g-link { width: 294px; margin-left: -1px; } .g-snap { width: 93px; margin-left: -1px; } .g-draw { width: 294px; }
.g-tips { width: 232px; } .g-next { width: 20px; }

.gbody-big { display: flex; }
.big { display: flex; flex-direction: column; align-items: center; white-space: nowrap; line-height: 16px; padding-top: 3px; position: relative; }
.big span { margin-top: -1px; }
.ico32 { width: 32px; height: 32px; }
.g-new .gbody { padding-left: 6px; gap: 6px; }
.g-new .big { width: 36px; }
.g-comp .gbody { padding: 1px 0 0 2px; gap: 1px; }
.big-lib {
  width: 83px; height: 66px; padding-top: 2px;
  background: linear-gradient(#fbc893 0, #f7a666 50%, #f8a03c 50%, #ffe9a6 85%, #fbc26e 100%);
  border: 1px solid #e8cd7c; border-radius: 2px;
}
.big-cat { width: 66px; padding-top: 2px; }
.tips { padding-left: 2px; }
.tips .big { width: 42px; }
.tips .big:last-child { width: 60px; }

.gcols { display: flex; }
.col { display: flex; flex-direction: column; }
.ri { height: 22px; display: flex; align-items: center; gap: 3px; white-space: nowrap; }
.ri > span { padding-bottom: 4px; }
.ri small { font-size: 10.500px; }
.ri-off { color: #a6a8ab; }
.i16 { width: 16px; height: 16px; }
.i18 { width: 18px; height: 18px; }
.c-ins1 { width: 118px; padding-left: 5px; }
.c-ins2 { padding-left: 5px; }
.c-link1 { width: 138px; padding-left: 5px; }
.c-link2 { padding-left: 5px; }
.g-link .ri { gap: 2px; }
.c-d1 { width: 84px; padding: 0 3px; }
.c-d1 .ri { padding-left: 2px; }
.c-d1 .ri-hot { height: 21px; padding: 0 2px 0 3px; background: linear-gradient(#fdd9a8, #f9b75f); border: 1px solid #e2a24b; border-radius: 2px; margin-top: 1px; }
.c-d2 { width: 64px; }
.c-d3 { width: 92px; }
.t-ico { width: 16px; font: 700 17px/22px "Liberation Serif", serif; color: #1b50b8; text-align: center; }
.svgT { font: 700 22px "Liberation Serif", serif; fill: #1b50b8; text-anchor: middle; }
.caret { width: 0; height: 0; border: 3px solid transparent; border-top: 3px solid #555; border-bottom: 0; }
.big .caret { margin-top: 5px; }
.caret-r { margin-left: 2px; }

.snap { padding: 1px 0 0 5px; display: flex; flex-direction: column; }
.snaprow { height: 22px; display: flex; align-items: center; gap: 3px; }
.combo {
  width: 65px; height: 22px; display: flex; align-items: center; justify-content: space-between;
  padding: 0 5px 0 2px; background: #e7e7e7; border: 1px solid #8a8a8a;
}
.combo span { padding-bottom: 4px; }
.snaprow + .snaprow .combo { border-top: 0; }

.darkstrip { height: 3px; background: #4e4e4e; }

/* workspace */
.workspace { height: 753px; display: flex; }
.lib { width: 432px; display: flex; flex-direction: column; padding-top: 1px; background: #f0f0f0; }
.libtitle {
  height: 19px; margin-left: 1px; background: #a1a3a1; color: #4d4d4d;
  display: flex; align-items: center; justify-content: space-between; padding: 0 6px 0 3px; font-size: 13px;
}
.libtitle > span:first-child { padding-bottom: 5px; word-spacing: -2px; }
.libctl { display: flex; align-items: center; gap: 9px; }
.libctl b { font-weight: 700; font-size: 11px; color: #555; }
.libtools { height: 30px; display: flex; align-items: flex-start; padding: 5px 0 0 8px; gap: 3px; }
.i17 { width: 20px; height: 16px; }
.libtabs { height: 25px; display: flex; align-items: flex-end; }
.ltab { width: 43px; height: 23px; margin-left: 1px; padding-right: 11px; text-align: center; font-size: 12px; line-height: 24px; background: #f0f0f0; border: 1px solid #d9d9d9; border-bottom: 0; }
.ltab-on { width: 63px; height: 25px; margin-left: 0; padding: 0 0 0 1px; background: #fff; border: 0; border-top: 1px solid #e0e0e0; border-right: 1px solid #d9d9d9; line-height: 22px; }

.libbody { flex: 1; min-height: 0; margin: 0 2px 0 4px; display: flex; flex-direction: column; background: #f0f0f0; }
.filterrow { height: 30px; display: flex; background: #f6f7f8; border: 1px solid #dcdcdc; border-bottom: 0; }
.filter { width: 215px; height: 28px; display: flex; align-items: center; background: #e9eff7; padding-left: 5px; }
.finput {
  width: 165px; height: 19px; background: #fff; border: 1px solid #c9ced4; color: #777;
  font-style: italic; font-size: 12px; line-height: 17px; padding-left: 7px;
}
.fsep { width: 1px; height: 19px; background: #b3b8be; margin: 0 5px; }
.fmenu { margin: 12px 0 0 8px; }

.treebox { height: 303px; flex: none; width: 424px; display: flex; border: 1px solid #8d929a; background: #fff; overflow: hidden; }
.tree { list-style: none; margin: 0; padding: 1px 0 0; flex: 1; font-size: 11px; overflow: hidden; }
.tree li { height: 17.250px; display: flex; align-items: center; white-space: nowrap; }
.tree em { font-size: 10px; }
.l0 { padding-left: 6px; } .l1 { padding-left: 14px; } .l2 { padding-left: 22px; }
.exp { width: 7px; height: 10px; margin-right: 2px; }
.bk { width: 18px; height: 16px; margin-right: 5px; }
.sel { background: #f0f0f0; margin-left: -2px; padding: 1px 2px; }
.scroll { width: 17px; display: flex; flex-direction: column; background: #fff; }
.sbtn { height: 17px; display: flex; align-items: center; justify-content: center; background: #f0f0f0; }
.thumb { height: 84px; background: #c8c8c8; }
.strack { flex: 1; }

.grip { height: 8px; width: 424px; display: flex; align-items: center; justify-content: center; }
.grip span { width: 48px; height: 2px; background: repeating-linear-gradient(90deg, #8b8b8b 0 2px, transparent 2px 5px); }
.crumb { height: 18px; width: 424px; display: flex; background: #f3f4f6; border-top: 1px solid #8d929a; border-left: 1px solid #8d929a; }
.crumbtext { width: 405px; display: flex; align-items: center; gap: 4px; padding-left: 8px; font-size: 11px; border-bottom: 1px solid #c8ccd2; }
.tri { width: 0; height: 0; border: 4px solid transparent; border-left: 5px solid #000; border-right: 0; margin-right: 1px; }
.crumbbtn { width: 18px; display: flex; align-items: center; justify-content: center; background: #d9dbdd; border: 1px solid #9a9fa6; }

.cells {
  flex: 1; width: 424px; padding: 7px 0 0 5px;
  display: grid; grid-template-columns: repeat(5, 74px); grid-auto-rows: 73px;
  background: #fff; border-left: 1px solid #8d929a; border-right: 1px solid #8d929a;
}
.cell { margin: 0; display: flex; flex-direction: column; align-items: center; font-size: 11px; line-height: 14px; white-space: nowrap; }
.tile { width: 32px; height: 32px; }
.cell figcaption { margin-top: 4px; }
.cell-sel .tile { background: #b2d3f0; }
.cell-sel figcaption { background: #6f98e6; color: #fff; padding: 0 4px; }
.cell-iso .tile { background: linear-gradient(#fff, #ececec); border: 1px solid #d8d8d8; border-radius: 2px; }
.cell-iso figcaption { margin-top: 1px; }
.cell-iso a { color: #2a1ee8; font-size: 11px; letter-spacing: .1px; line-height: 13px; }

.vsplit { width: 5px; background: #5a5a5a; }
.canvas { flex: 1; min-width: 0; padding-top: 2px; background: #f0f0f0; display: flex; flex-direction: column; border-left: 1px solid #e6e6e6; }
.canvashead { height: 42px; background: #b9c0cd; border-bottom: 1px solid #2e2e2e; }
.sheet { width: 966px; height: 709px; background: #fff; }
.d-title { font: 500 25.500px "Noto Sans CJK SC", sans-serif; fill: #000; }
.d-ctrl { font: 9px "Liberation Sans", sans-serif; fill: #1a1ae0; }
.d-small { font: 9px "Liberation Sans", sans-serif; fill: #222; }

/* overlays */
.redarrow { position: absolute; left: 0; top: 0; pointer-events: none; }
.logo { position: absolute; left: 5px; top: 23px; }
.edgebar { position: absolute; left: 0; top: 33px; width: 4px; height: 90px; background: #68a4dc; border-radius: 0 2px 2px 0; }
```
